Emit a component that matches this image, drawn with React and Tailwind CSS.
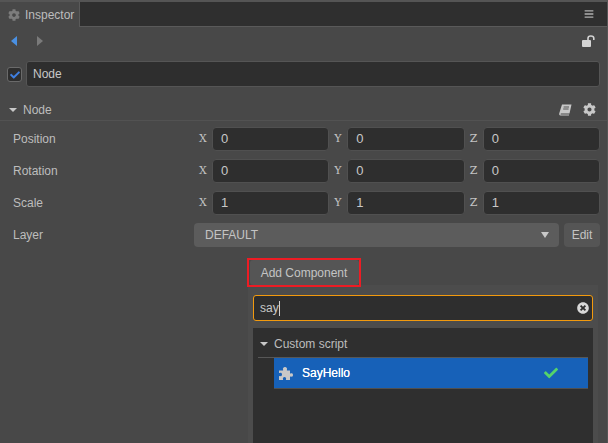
import React from "react";
import { FaCog, FaCheck, FaBars, FaTimesCircle } from "react-icons/fa";

const rows = [
  { label: "Position", values: ["0", "0", "0"] },
  { label: "Rotation", values: ["0", "0", "0"] },
  { label: "Scale", values: ["1", "1", "1"] },
];

function NumField({ axis, value }) {
  return (
    <div className="flex items-center flex-1">
      <span className="w-[18px] shrink-0 text-[11px] text-[#c4c4c4] font-['DejaVu_Serif',serif] pl-[5px]">{axis}</span>
      <div className="flex-1 h-[24px] flex items-center pl-[8px] bg-[#2e2e2e] border border-[#505050] rounded-[4px] text-[13px] text-[#c8c8c8]">
        {value}
      </div>
    </div>
  );
}

function Triangle({ className }) {
  return <div className={`w-0 h-0 shrink-0 border-l-[4px] border-r-[4px] border-t-[4px] border-l-transparent border-r-transparent ${className}`} />;
}

function OpenLock() {
  return (
    <svg width="14" height="12" viewBox="0 0 14 12" className="ml-auto">
      <rect x="0" y="5" width="9" height="7" rx="1" fill="#d4d4d4" />
      <path d="M6 5V3.2C6 1.8 7.2 1 8.8 1s3 .8 3 2.2V5" fill="none" stroke="#d4d4d4" strokeWidth="1.6" />
    </svg>
  );
}

function SlantBook() {
  return (
    <svg width="13" height="12" viewBox="0 0 13 12" className="ml-auto">
      <path d="M3 0.5H12.5L10.5 9.5H2.5C1.8 9.5 1.5 10 1.6 10.4H10.2L9.9 11.5H1.5C.5 11.5 0 10.8 .2 9.6Z" fill="#c8c8c8" />
      <path d="M4.6 3H10M4.2 5H9.6" stroke="#555" strokeWidth="1" />
    </svg>
  );
}

function Puzzle() {
  return (
    <svg width="14" height="13" viewBox="0 0 14 13" className="shrink-0">
      <path d="M0 3.5H3.6C4.2 3.5 4.3 3 4 2.5 3.5 1.5 4.4 0 6 0s2.5 1.5 2 2.5C7.700 3 7.800 3.500 8.400 3.500H11V6C11 6.600 11.500 6.700 12 6.400 12.900 5.900 14 6.600 14 8S12.900 10.100 12 9.600C11.500 9.300 11 9.400 11 10V13H7.500C6.900 13 6.800 12.500 7 12 7.400 11.100 6.700 10 5.500 10S3.600 11.100 4 12C4.200 12.500 4.100 13 3.500 13H0V9.500C0 8.900 .5 8.800 1 9.100 1.900 9.600 3 8.900 3 7.500S1.900 5.400 1 5.900C.5 6.200 0 6.100 0 5.500Z" fill="#c8c8c8" />
    </svg>
  );
}

export default function App() {
  return (
    <div className="w-[608px] h-[443px] overflow-hidden bg-[#484848] text-[12px] text-[#bdbdbd] font-['Liberation_Sans',Arial,sans-serif] border-t-2 border-[#555] border-r border-r-[#555]">
      <div className="flex h-[25px] border-b border-[#5a5a5a] bg-[#2f2f2f]">
        <div className="w-[80px] h-[25px] bg-[#484848] border-r border-[#5a5a5a] flex items-center pl-[8px] gap-[5px]">
          <FaCog className="text-[#7c7c7c] text-[12px]" />
          <span>Inspector</span>
        </div>
        <div className="flex-1 flex items-center justify-end pr-[13px]">
          <FaBars className="text-[#b0b0b0] text-[10px]" />
        </div>
      </div>

      <div className="flex items-center h-[28px] pl-[11px] pr-[11px]">
        <div className="w-0 h-0 border-y-[5px] border-y-transparent border-r-[6px] border-r-[#4a90e2]" />
        <div className="w-0 h-0 ml-[20px] border-y-[5px] border-y-transparent border-l-[6px] border-l-[#7a7a7a]" />
        <OpenLock />
      </div>

      <div className="flex items-center gap-[4px] pl-[7px] pr-[7px] h-[26px] mt-[6px]">
        <div className="w-[15px] h-[15px] mt-[1px] shrink-0 bg-[#2e2e2e] border border-[#6a6a6a] rounded-[3px] flex items-center justify-center">
          <FaCheck className="text-[#3f7fe0] text-[10px]" />
        </div>
        <div className="flex-1 h-[26px] flex items-center pl-[6px] bg-[#2e2e2e] border border-[#555] rounded-[3px] text-[#c8c8c8] text-[12px]">
          Node
        </div>
      </div>

      <div className="flex items-center h-[22px] mt-[12px] pl-[9px] pr-[11px] border-b border-[#525252] gap-[6px]">
        <Triangle className="border-t-[#c8c8c8]" />
        <span>Node</span>
        <SlantBook />
        <FaCog className="ml-[5px] text-[#c8c8c8] text-[13px]" />
      </div>

      <div className="flex flex-col gap-[8px] mt-[6px] pl-[13px] pr-[7px]">
        {rows.map((row) => (
          <div key={row.label} className="flex items-center h-[24px]">
            <span className="w-[181px]">{row.label}</span>
            <div className="flex-1 flex">
              <NumField axis="X" value={row.values[0]} />
              <NumField axis="Y" value={row.values[1]} />
              <NumField axis="Z" value={row.values[2]} />
            </div>
          </div>
        ))}
        <div className="flex items-center h-[24px]">
          <span className="w-[181px]">Layer</span>
          <div className="w-[365px] h-[24px] flex items-center justify-between pl-[11px] pr-[10px] bg-[#5c5c5c] rounded-[4px] text-[#c4c4c4]">
            DEFAULT
            <div className="w-0 h-0 border-l-[4px] border-r-[4px] border-t-[6px] border-l-transparent border-r-transparent border-t-[#c8c8c8]" />
          </div>
          <div className="ml-[5px] flex-1 h-[24px] flex items-center justify-center bg-[#555] rounded-[4px] text-[#c4c4c4]">
            Edit
          </div>
        </div>
      </div>

      <div className="relative z-10 w-[114px] h-[29px] mt-[11px] ml-[247px] flex items-center justify-center border-2 border-[#ed1c24]">
        <div className="w-[109px] h-[25px] flex items-center justify-center bg-[#555] rounded-[3px] text-[#c4c4c4]">
          Add Component
        </div>
      </div>

      <div className="ml-[248px] w-[350px] h-[160px] -mt-[2px] bg-[#4c4c4c] px-[5px] pt-[10px]">
        <div className="flex items-center h-[26px] pl-[6px] pr-[3px] bg-[#2e2e2e] border border-[#f29a0e] rounded-[3px] text-[#c8c8c8]">
          <span>say</span>
          <span className="w-px h-[15px] bg-[#d0d0d0]" />
          <FaTimesCircle className="ml-auto text-[#d8d8d8] text-[12px]" />
        </div>
        <div className="h-[120px] mt-[7px] bg-[#2f2f2f] pl-[5px] pr-[5px]">
          <div className="flex items-center h-[30px] pt-[3px] pl-[2px] gap-[6px] border-b border-[#575757]">
            <Triangle className="border-t-[#c8c8c8]" />
            <span>Custom script</span>
          </div>
          <div className="ml-[16px] h-[31px] flex items-center pl-[5px] bg-[#1761b8] border-b border-[#505050] text-white">
            <Puzzle />
            <span className="ml-[9px] font-medium [text-shadow:0_0_0.4px_#fff]">SayHello</span>
            <FaCheck className="shrink-0 ml-[194px] text-[#55d46a] text-[14px]" />
          </div>
        </div>
      </div>
    </div>
  );
}
